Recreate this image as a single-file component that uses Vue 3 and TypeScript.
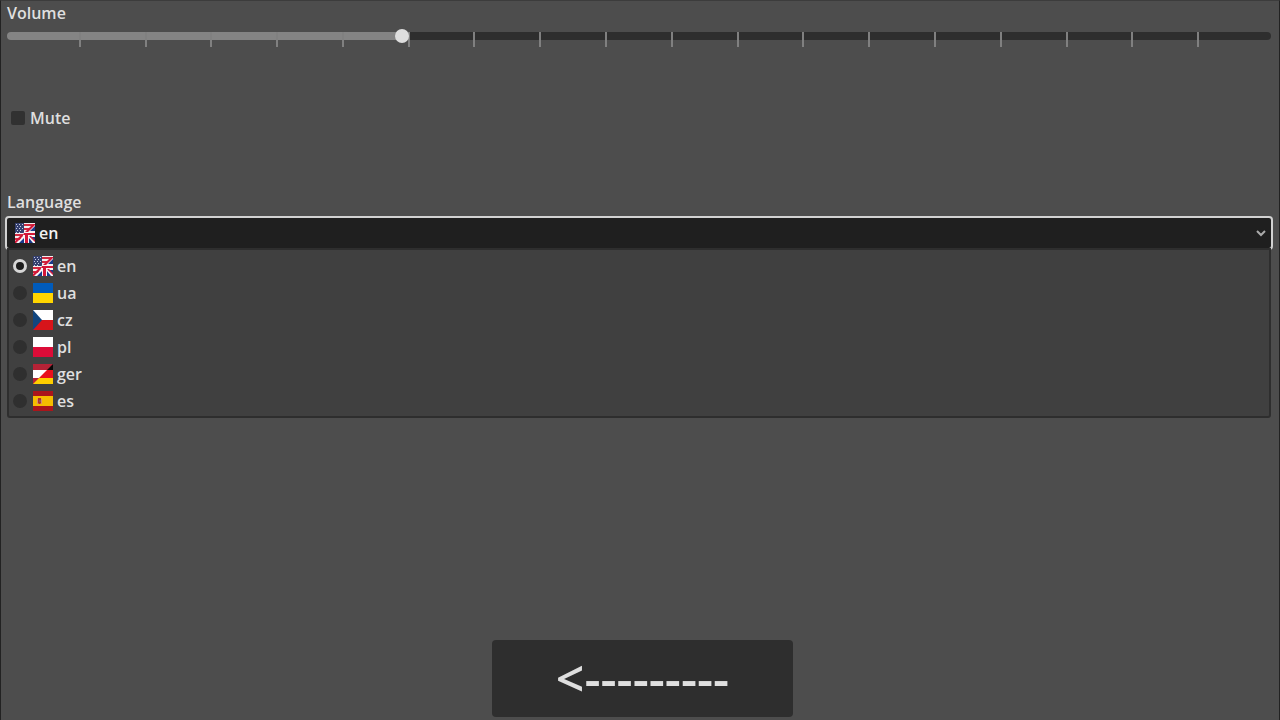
<script setup lang="ts">
import { ref } from 'vue'

const volume = ref(31)
const muted = ref(false)
const language = ref('en')
const languages: string[] = ['en', 'ua', 'cz', 'pl', 'ger', 'es']
const tickCount = 20
</script>

<template>
  <main class="settings">
    <svg class="defs" width="0" height="0" aria-hidden="true">
      <symbol id="flag-en" viewBox="0 0 20 20">
        <rect width="20" height="20" fill="#f4eef0" />
        <path d="M9 1H20V3H9ZM9 5H18V7H9ZM0 11H9V13H0ZM0 15H7V17H0Z" fill="#d02a40" />
        <rect width="9" height="10" fill="#35406f" />
        <path d="M1 1h1v1H1zM4 1h1v1H4zM7 1h1v1H7zM2 3h1v1H2zM5 3h1v1H5zM1 5h1v1H1zM4 5h1v1H4zM7 5h1v1H7zM2 7h1v1H2zM5 7h1v1H5zM1 9h1v1H1zM4 9h1v1H4z" fill="#c8cce0" />
        <path d="M20 1V20H2L8 13V10L11 9Z" fill="#f7f3f5" />
        <path d="M20 3V8H15ZM20 14V18L15 14ZM9 15V20H4ZM14 15L18 20H14Z" fill="#17388a" />
        <path d="M9 10H20V12H13V20H10V12H8ZM14 13H16L20 17V19ZM8 13L1 20H0V18L6 12ZM18 1H20V2L13 9H10Z" fill="#d31638" />
      </symbol>
      <symbol id="flag-ua" viewBox="0 0 20 20">
        <rect width="20" height="20" fill="#005bbb" />
        <rect y="10" width="20" height="10" fill="#ffd500" />
      </symbol>
      <symbol id="flag-cz" viewBox="0 0 20 20">
        <rect width="20" height="20" fill="#fff" />
        <rect y="10" width="20" height="10" fill="#d7141a" />
        <path d="M0 0L9 10L0 20Z" fill="#11457e" />
      </symbol>
      <symbol id="flag-pl" viewBox="0 0 20 20">
        <rect width="20" height="20" fill="#fff" />
        <rect y="10" width="20" height="10" fill="#dc0c38" />
      </symbol>
      <symbol id="flag-ger" viewBox="0 0 20 20">
        <rect width="20" height="20" fill="#b52236" />
        <rect y="6" width="20" height="8" fill="#fff" />
        <path d="M20 0V6H14Z" fill="#080808" />
        <path d="M14 6H20V14H6Z" fill="#e8111c" />
        <path d="M6 14H20V20H0Z" fill="#ffce00" />
      </symbol>
      <symbol id="flag-es" viewBox="0 0 20 20">
        <rect width="20" height="20" fill="#aa151b" />
        <rect y="5" width="20" height="10" fill="#f5bd00" />
        <path d="M4 8H5V13H4ZM8 8H9V13H8Z" fill="#d9916a" />
        <path d="M5 7H8V12L7 13H6L5 12Z" fill="#b3302b" />
        <rect x="6" y="9" width="2" height="2" fill="#8a5560" />
      </symbol>
    </svg>

    <section class="group">
      <label for="volume">Volume</label>
      <div class="slider">
        <div class="track" :style="{ '--level': volume + '%' }"></div>
        <div class="ticks" aria-hidden="true">
          <span v-for="n in tickCount" :key="n" class="tick"></span>
        </div>
        <input id="volume" v-model.number="volume" type="range" min="0" max="100" />
      </div>
    </section>

    <label class="mute">
      <input v-model="muted" type="checkbox" />
      <span>Mute</span>
    </label>

    <section class="group">
      <label for="language">Language</label>
      <div class="dropdown">
        <select id="language" v-model="language">
          <option v-for="code in languages" :key="code" :value="code">{{ code }}</option>
        </select>
        <svg class="flag current"><use :href="'#flag-' + language" /></svg>
        <svg class="chevron" viewBox="0 0 12 8" aria-hidden="true">
          <path d="M2 2L6 6L10 2" />
        </svg>
        <div class="popup">
          <label v-for="code in languages" :key="code" class="item">
            <input v-model="language" type="radio" name="language" :value="code" />
            <svg class="flag"><use :href="'#flag-' + code" /></svg>
            <span>{{ code }}</span>
          </label>
        </div>
      </div>
    </section>

    <button type="button" class="back">&lt;---------</button>
  </main>
</template>

<style>
body {
  background: #4d4d4d;
}
</style>

<style scoped>
.settings {
  box-sizing: border-box;
  min-height: 100vh;
  display: flex;
  flex-direction: column;
  padding: 0 8px 3px 6px;
  border: 1px solid #222;
  border-top-color: #3c3c3c;
  border-bottom: 0;
  background: #4d4d4d;
  color: #dfdfdf;
  font: 600 16px/24px "Open Sans", "Noto Sans", sans-serif;
}
.defs {
  position: absolute;
}
.group {
  display: flex;
  flex-direction: column;
}
.slider {
  display: grid;
  align-items: start;
  margin-top: 3px;
}
.slider > * {
  grid-area: 1 / 1;
}
.track {
  height: 8px;
  margin-top: 4px;
  border-radius: 4px;
  background: linear-gradient(to right, #848484 var(--level), #2e2e2e var(--level));
}
.slider input {
  appearance: none;
  width: 100%;
  height: 16px;
  margin: 0;
  background: transparent;
}
.slider input::-webkit-slider-thumb {
  appearance: none;
  width: 14px;
  height: 14px;
  border-radius: 50%;
  background: #dedede;
}
.ticks {
  display: flex;
  justify-content: space-between;
  height: 15px;
  margin: 4px 6px 0;
}
.tick {
  width: 2px;
  background: #808080;
}
.tick:first-child,
.tick:last-child {
  visibility: hidden;
}
.mute {
  display: flex;
  align-items: center;
  gap: 5px;
  align-self: flex-start;
  margin: 59px 0 60px 4px;
}
.mute input {
  appearance: none;
  width: 14px;
  height: 14px;
  margin: 0;
  border-radius: 2px;
  background: #313131;
}
.mute input:checked {
  background: #dfdfdf;
}
.dropdown {
  position: relative;
  margin: 2px -2px 0 -2px;
}
select {
  appearance: none;
  display: block;
  box-sizing: border-box;
  width: 100%;
  height: 34px;
  padding: 0 32px 0 32px;
  border: 2px solid #d2d2d2;
  border-radius: 4px;
  outline: 0;
  background: #1f1f1f;
  color: #f2f2f2;
  font: inherit;
}
.flag {
  display: block;
  width: 20px;
  height: 20px;
}
.current {
  position: absolute;
  left: 10px;
  top: 7px;
  pointer-events: none;
}
.chevron {
  position: absolute;
  right: 6px;
  top: 13px;
  width: 12px;
  height: 8px;
  fill: none;
  stroke: #aaa;
  stroke-width: 2;
  pointer-events: none;
}
.popup {
  position: absolute;
  top: 32px;
  left: 2px;
  right: 2px;
  display: flex;
  flex-direction: column;
  padding: 2px 4px;
  border: 2px solid #2e2e2e;
  border-radius: 0 0 3px 3px;
  background: #404040;
}
.item {
  display: flex;
  align-items: center;
  height: 27px;
}
.item input {
  appearance: none;
  width: 14px;
  height: 14px;
  margin: 0 6px 0 0;
  border-radius: 50%;
  background: #2f2f2f;
}
.item input:checked {
  box-sizing: border-box;
  border: 3px solid #d6d6d6;
  background: #1c1c1c;
}
.item span {
  margin-left: 4px;
}
.back {
  align-self: center;
  width: 301px;
  height: 77px;
  margin: auto 0 0 7px;
  padding: 0;
  border: 0;
  border-radius: 4px;
  background: #2e2e2e;
  color: #dfdfdf;
  font: 600 50px/77px "Open Sans", "Noto Sans", sans-serif;
}
</style>
